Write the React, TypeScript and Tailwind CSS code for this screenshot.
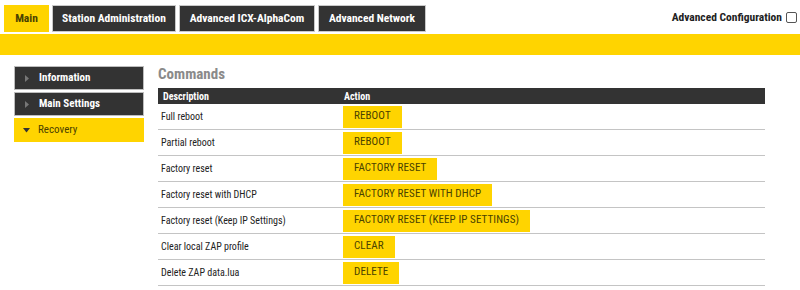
import React from 'react';

const tabs = [
  { label: 'Main', w: 'w-[45px]', active: true },
  { label: 'Station Administration', w: 'w-[124px]' },
  { label: 'Advanced ICX-AlphaCom', w: 'w-[136px]' },
  { label: 'Advanced Network', w: 'w-[108px]' },
];

const menu = [
  { label: 'Information' },
  { label: 'Main Settings' },
  { label: 'Recovery', active: true },
];

const rows = [
  ['Full reboot', 'REBOOT'],
  ['Partial reboot', 'REBOOT'],
  ['Factory reset', 'FACTORY RESET'],
  ['Factory reset with DHCP', 'FACTORY RESET WITH DHCP'],
  ['Factory reset (Keep IP Settings)', 'FACTORY RESET (KEEP IP SETTINGS)'],
  ['Clear local ZAP profile', 'CLEAR'],
  ['Delete ZAP data.lua', 'DELETE'],
];

export default function App() {
  return (
    <div className="w-[800px] h-[290px] bg-white overflow-hidden text-[#333] font-['Roboto_Condensed',Roboto,sans-serif]">
      {/* top tabs */}
      <div className="flex items-start h-[34px] pl-[4px] pt-[5px] pr-[3px]">
        <div className="flex gap-[3px]">
          {tabs.map((t) => (
            <div
              key={t.label}
              className={`${t.w} h-[27px] flex items-center justify-center text-[11.5px] font-bold border ${
                t.active ? 'bg-[#ffd400] text-[#4a4200] border-[#ffd400]' : 'bg-[#333333] text-white border-[#c9c9c9]'
              }`}
            >
              {t.label}
            </div>
          ))}
        </div>
        <label className="ml-auto flex items-center gap-[4px] text-[11.5px] font-bold text-[#222] mt-[4px]">
          Advanced Configuration
          <span className="w-[11px] h-[11px] border border-[#555] rounded-[2px] bg-white" />
        </label>
      </div>
      <div className="h-[21px] bg-[#ffd400]" />

      <div className="flex pt-[11px]">
        {/* sidebar */}
        <div className="ml-[14px] w-[130px] flex flex-col gap-[2px]">
          {menu.map((m) => (
            <div
              key={m.label}
              className={`h-[24px] flex items-center text-[11px] ${
                m.active ? 'bg-[#ffd400] text-[#4a4200]' : 'bg-[#333333] text-white font-bold border border-[#bdbdbd]'
              }`}
            >
              <span className="w-[24px] flex justify-center">
                {m.active ? (
                  <svg width="7" height="5" viewBox="0 0 7 5"><path d="M0 0h7L3.5 4.5z" fill="#333" /></svg>
                ) : (
                  <svg width="4" height="7" viewBox="0 0 4 7"><path d="M0 0l4 3.5L0 7z" fill="#777" /></svg>
                )}
              </span>
              {m.label}
            </div>
          ))}
        </div>

        {/* content */}
        <div className="ml-[14px] w-[607px]">
          <div className="h-[22px] text-[15px] font-bold text-[#8a8a8a] leading-[16px]">Commands</div>
          <div className="h-[16px] bg-[#333333] flex items-center text-[10px] font-bold text-white">
            <div className="w-[181px] pl-[5px]">Description</div>
            <div className="pl-[5px]">Action</div>
          </div>
          {rows.map(([d, a], i) => (
            <div key={i} className="h-[26px] flex items-center border-b border-[#c4c4c4] text-[10px]">
              <div className="w-[181px] pl-[3px] text-[#222]">{d}</div>
              <div className="pl-[4px]">
                <span className="inline-flex items-center h-[22px] px-[11px] bg-[#ffd400] text-[#4a4200] text-[11px] tracking-[0.1px]">
                  {a}
                </span>
              </div>
            </div>
          ))}
        </div>
      </div>
    </div>
  );
}
